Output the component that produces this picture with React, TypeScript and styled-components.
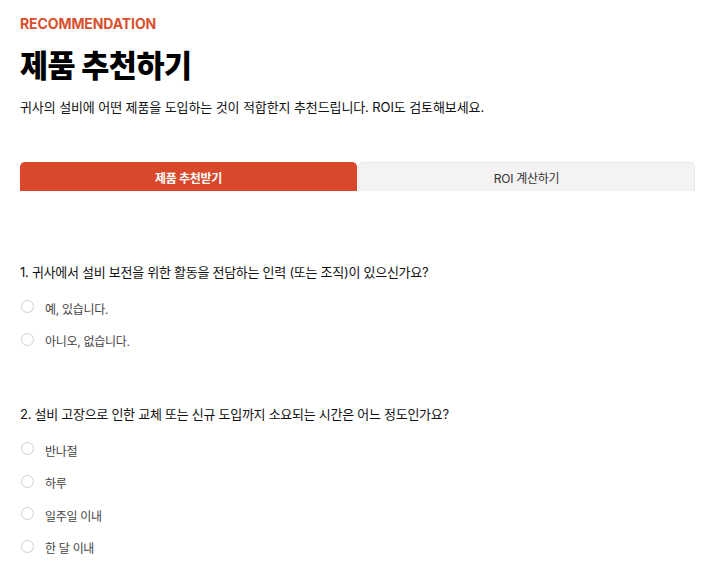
import React from "react";
import styled, { createGlobalStyle } from "styled-components";

const Global = createGlobalStyle`
  html, body { margin: 0; padding: 0; background: #fff; }
  body { font-family: "Inter", "Noto Sans CJK KR", sans-serif; color: #111; }
`;

const Page = styled.div`
  padding: 15px 12px 0 20px;
  display: flex;
  flex-direction: column;
`;

const Eyebrow = styled.div`
  font-size: 14px;
  font-weight: 700;
  color: #d9502e;
  line-height: 18px;
  letter-spacing: -0.1px;
`;

const Title = styled.h1`
  margin: 13px 0 0;
  font-size: 30.5px;
  font-weight: 800;
  line-height: 40px;
  letter-spacing: -0.5px;
  color: #000;
`;

const Lead = styled.p`
  margin: 11px 0 0;
  font-size: 13px;
  line-height: 20px;
  color: #111;
  letter-spacing: -0.1px;
`;

const Tabs = styled.div`
  margin-top: 45px;
  display: grid;
  grid-template-columns: 1fr 1fr;
  gap: 1px;
`;

const Tab = styled.button<{ $active?: boolean }>`
  height: 29px;
  border: 1px solid ${(p) => (p.$active ? "#d9482a" : "#ebe7e7")};
  border-bottom: none;
  border-radius: 5px 5px 0 0;
  background: ${(p) => (p.$active ? "#d9482a" : "#f4f2f2")};
  color: ${(p) => (p.$active ? "#fff" : "#333")};
  font-family: inherit;
  font-size: 12px;
  font-weight: ${(p) => (p.$active ? 700 : 400)};
  letter-spacing: -0.3px;
  padding: 0;
`;

const Question = styled.section<{ $first?: boolean }>`
  margin-top: ${(p) => (p.$first ? "71px" : "47px")};
  display: flex;
  flex-direction: column;
`;

const QTitle = styled.div`
  font-size: 13px;
  line-height: 20px;
  color: #111;
  letter-spacing: -0.27px;
  margin-bottom: 10px;
`;

const Option = styled.label`
  display: flex;
  align-items: center;
  height: 32.5px;
  gap: 11px;
  padding-left: 1px;
  font-size: 12px;
  color: #444;
  letter-spacing: -0.3px;
`;

const Radio = styled.span`
  width: 11px;
  height: 11px;
  border-radius: 50%;
  border: 1px solid #cfcfcf;
  background: #fff;
  margin-top: -3px;
  flex: none;
`;

const questions = [
  {
    q: "1. 귀사에서 설비 보전을 위한 활동을 전담하는 인력 (또는 조직)이 있으신가요?",
    opts: ["예, 있습니다.", "아니오, 없습니다."],
  },
  {
    q: "2. 설비 고장으로 인한 교체 또는 신규 도입까지 소요되는 시간은 어느 정도인가요?",
    opts: ["반나절", "하루", "일주일 이내", "한 달 이내"],
  },
];

export default function App() {
  return (
    <>
      <Global />
      <Page>
        <Eyebrow>RECOMMENDATION</Eyebrow>
        <Title>제품 추천하기</Title>
        <Lead>귀사의 설비에 어떤 제품을 도입하는 것이 적합한지 추천드립니다. ROI도 검토해보세요.</Lead>
        <Tabs>
          <Tab $active>제품 추천받기</Tab>
          <Tab>ROI 계산하기</Tab>
        </Tabs>
        {questions.map((item, i) => (
          <Question key={i} $first={i === 0}>
            <QTitle>{item.q}</QTitle>
            {item.opts.map((o) => (
              <Option key={o}>
                <Radio />
                {o}
              </Option>
            ))}
          </Question>
        ))}
      </Page>
    </>
  );
}
